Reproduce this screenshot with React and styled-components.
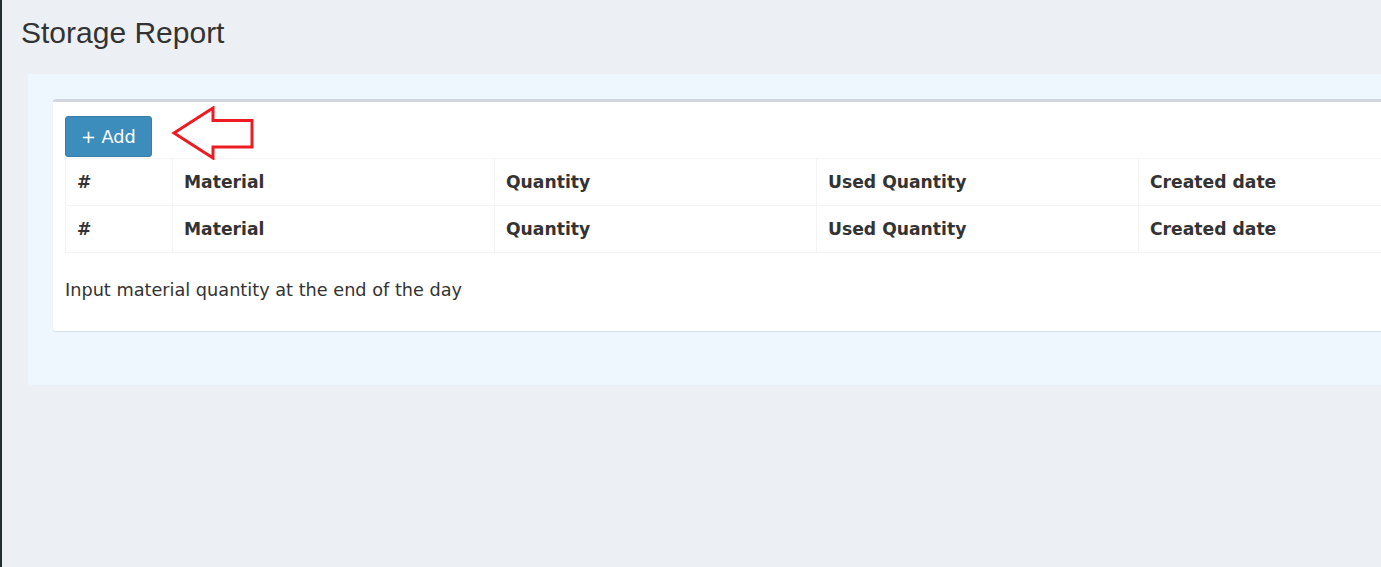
import React from 'react';
import styled, { createGlobalStyle } from 'styled-components';

const GlobalStyle = createGlobalStyle`
html, body {
  margin: 0;
  padding: 0;
  background: #ecf0f5;
  overflow: hidden;
}
#root {
  min-height: 567px;
}`

const Page = styled.div`
display: flex;
min-height: 567px;
background: #ecf0f5;`

const SideEdge = styled.div`
width: 2px;
flex: none;
background: #222d32;`

const Main = styled.main`
flex: none;
width: 1500px;`

const Title = styled.h1`
margin: 0;
height: 74px;
box-sizing: border-box;
padding: 16px 0 0 19px;
font-family: "Liberation Sans", Arial, sans-serif;
font-weight: normal;
font-size: 30px;
line-height: 33px;
color: #333;`

const Content = styled.section`
margin-left: 26px;
padding: 25px 0 54px 25px;
background: #edf7fd;
border-radius: 0 0 0 4px;`

const Box = styled.div`
position: relative;
background: #fff;
border-top: 3px solid #d2d6de;
border-radius: 3px;
box-shadow: 0 1px 1px rgba(0, 0, 0, 0.1);
padding: 14px 0 0 12px;
height: 232px;
box-sizing: border-box;
font-family: "DejaVu Sans", Verdana, sans-serif;
color: #333;`

const AddButton = styled.button`
display: block;
height: 41px;
padding: 0 15px;
background: #3c8dbc;
border: 1px solid #367fa9;
border-radius: 3px;
color: #fff;
font-family: "DejaVu Sans", Verdana, sans-serif;
font-size: 17.7px;
cursor: pointer;`

const Table = styled.table`
border-collapse: collapse;
width: 1395px;
table-layout: fixed;
margin-top: 1px;
font-size: 17.2px;`

const Cell = styled.th`
box-sizing: border-box;
height: 47px;
padding: 0 11px;
text-align: left;
font-weight: bold;
border: 1px solid #f4f4f4;
width: ${p => p.$w}px;`

const Note = styled.p`
margin: 27px 0 0;
font-size: 17.7px;
line-height: 20px;`

const Arrow = styled.svg`
position: absolute;
left: 118px;
top: 4px;`

const columns = [
    { label: '#', w: 107 },
    { label: 'Material', w: 322 },
    { label: 'Quantity', w: 322 },
    { label: 'Used Quantity', w: 322 },
    { label: 'Created date', w: 322 },
];

const HeaderRow = () => (
    <tr>
        {columns.map(c => (
            <Cell key={c.label} $w={c.w}>{c.label}</Cell>
        ))}
    </tr>
);

const App = () => {
    return (
        <Page>
            <GlobalStyle />
            <SideEdge />
            <Main>
                <Title>Storage Report</Title>
                <Content>
                    <Box>
                        <AddButton>+ Add</AddButton>
                        <Arrow width="84" height="54" viewBox="0 0 84 54">
                            <path
                                d="M3 27 L42 2 L42 14.5 L81 14.5 L81 41 L42 41 L42 52 Z"
                                fill="none"
                                stroke="#ed1c24"
                                strokeWidth="3"
                                strokeLinejoin="miter"
                            />
                        </Arrow>
                        <Table>
                            <tbody>
                                <HeaderRow />
                                <HeaderRow />
                            </tbody>
                        </Table>
                        <Note>Input material quantity at the end of the day</Note>
                    </Box>
                </Content>
            </Main>
        </Page>
    );
};

export default App;
